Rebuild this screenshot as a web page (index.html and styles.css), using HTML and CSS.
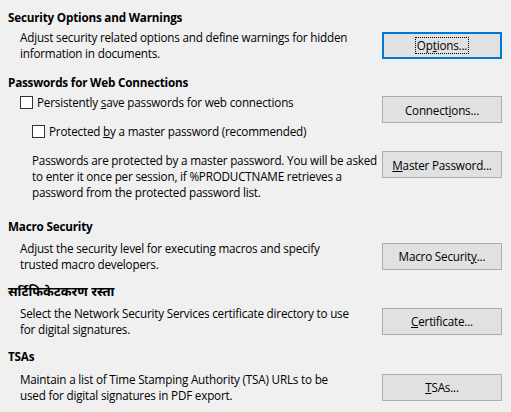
FILE: index.html
```html
<!DOCTYPE html>
<html>
<head>
<meta charset="utf-8">
<link rel="stylesheet" href="styles.css">
</head>
<body>
<div class="page">
  <div class="title t1">Security Options and Warnings</div>
  <div class="row r1">
    <div class="desc">Adjust security related options and define warnings for hidden<br>information in documents.</div>
    <button class="btn focused"><span class="focus">Op<u>t</u>ions...</span></button>
  </div>

  <div class="title t2">Passwords for Web Connections</div>
  <div class="row top r2">
    <label class="check c1"><span class="box"></span><span>Persistently <u>s</u>ave passwords for web connections</span></label>
    <button class="btn b2">Connect<u>i</u>ons...</button>
  </div>
  <label class="check c2"><span class="box"></span><span>Protected <u>b</u>y a master password (recommended)</span></label>
  <div class="row top r3">
    <div class="para">Passwords are protected by a master password. You will be asked<br>to enter it once per session, if %PRODUCTNAME retrieves a<br>password from the protected password list.</div>
    <button class="btn"><u>M</u>aster Password...</button>
  </div>

  <div class="title t3">Macro Security</div>
  <div class="row r4">
    <div class="desc">Adjust the security level for executing macros and specify<br>trusted macro developers.</div>
    <button class="btn">Macro Securit<u>y</u>...</button>
  </div>

  <div class="title t4">सर्टिफिकेटकरण रस्ता</div>
  <div class="row r5">
    <div class="desc">Select the Network Security Services certificate directory to use<br>for digital signatures.</div>
    <button class="btn"><u>C</u>ertificate...</button>
  </div>

  <div class="title t5">TSAs</div>
  <div class="row r6">
    <div class="desc">Maintain a list of Time Stamping Authority (TSA) URLs to be<br>used for digital signatures in PDF export.</div>
    <button class="btn"><u>T</u>SAs...</button>
  </div>
</div>
</body>
</html>
```

FILE: styles.css
```css
html, body {
  margin: 0;
  padding: 0;
  background: #f0f0f0;
}
body {
  font-family: "Open Sans", "Noto Sans", "Noto Sans Devanagari", sans-serif;
  font-size: 11.7px;
  letter-spacing: -0.2px;
  line-height: 16px;
  color: #000;
}
.page {
  padding: 9px 9px 0 8px;
  display: flex;
  flex-direction: column;
}
.title {
  font-weight: bold;
  height: 16px;
  white-space: nowrap;
}
.row {
  display: flex;
  justify-content: space-between;
  align-items: center;
}
.row.top {
  align-items: flex-start;
}
.desc {
  padding-left: 12px;
  white-space: nowrap;
}
.para {
  padding-left: 24px;
  margin-top: 1px;
  white-space: nowrap;
}
.btn {
  width: 120px;
  height: 27px;
  flex: none;
  background: #e1e1e1;
  border: 1px solid #adadad;
  font: inherit;
  letter-spacing: inherit;
  color: #000;
  padding: 0;
  display: flex;
  align-items: center;
  justify-content: center;
}
.btn.focused {
  border: 2px solid #0078d7;
}
.focus {
  outline: 1px dotted #000;
  outline-offset: 0;
  padding: 0 1px;
  line-height: 15px;
}
.b2 {
  margin-top: 2px;
}
.check {
  display: flex;
  align-items: center;
  gap: 4px;
  height: 16px;
  white-space: nowrap;
}
.box {
  width: 11px;
  height: 11px;
  border: 1px solid #333;
  background: #fff;
  flex: none;
}
.c1 { padding-left: 12px; }
.c2 { padding-left: 24px; margin-top: 0; }
.r1 { margin-top: 4px; }
.t2 { margin-top: 13px; }
.r2 { margin-top: 4px; }
.r3 { margin-top: 12px; }
.t3 { margin-top: 18px; }
.r4 { margin-top: 6px; }
.t4 { margin-top: 11px; font-size: 13px; letter-spacing: 0; }
.r5 { margin-top: 6px; }
.t5 { margin-top: 11px; }
.r6 { margin-top: 7px; }
```
